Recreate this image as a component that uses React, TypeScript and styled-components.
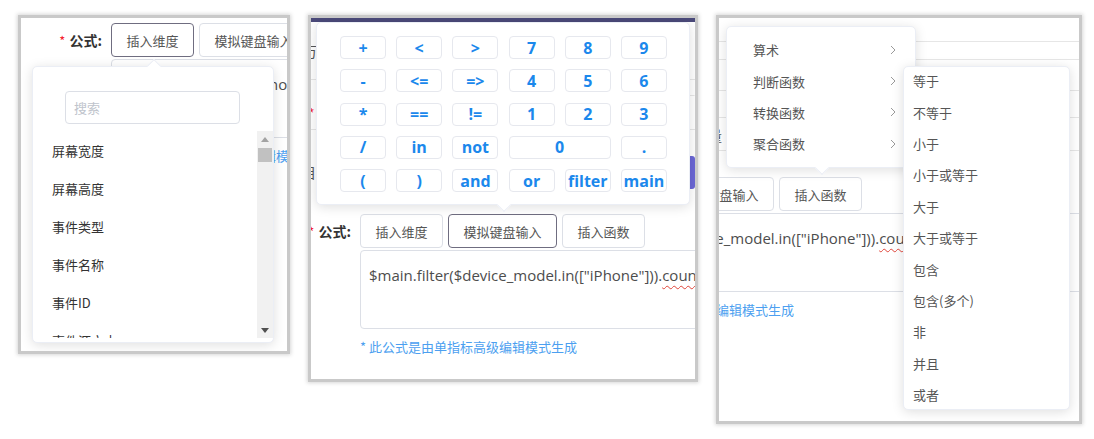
import React from "react";
import styled, { createGlobalStyle } from "styled-components";

const GlobalStyle = createGlobalStyle`
  html, body { margin: 0; padding: 0; background: #fff; }
  body { font-family: "Noto Sans CJK SC", "Noto Sans", sans-serif; }
  * { box-sizing: border-box; }
`;

const Page = styled.div`
  display: flex;
  align-items: flex-start;
  gap: 18px;
  padding: 15px 0 0 18px;
  width: 1094px;
  height: 439px;
  overflow: hidden;
`;

const Frame = styled.div<{ $w: number; $h: number }>`
  position: relative;
  flex: none;
  width: ${(p) => p.$w}px;
  height: ${(p) => p.$h}px;
  border: 3px solid #c9c9c9;
  box-shadow: 0 0 4px 1px rgba(0, 0, 0, 0.16);
  background: #fff;
  overflow: hidden;
  display: flex;
  flex-direction: column;
`;

/* ---------- formula block (shared by the three shots) ---------- */

const Formula = styled.div<{ $shift: number; $top?: number }>`
  flex: none;
  display: flex;
  flex-direction: column;
  margin-left: ${(p) => p.$shift}px;
  margin-top: ${(p) => p.$top ?? 0}px;
`;

const FormRow = styled.div`
  display: flex;
  align-items: center;
`;

const Label = styled.div`
  flex: none;
  width: 90px;
  display: flex;
  justify-content: flex-end;
  align-items: center;
  gap: 4px;
  padding-right: 9px;
  font-size: 14px;
  font-weight: 600;
  color: #333;
  white-space: nowrap;
`;

const Star = styled.span`
  color: #f5222d;
  font-size: 13px;
  font-weight: 400;
`;

const Tabs = styled.div`
  display: flex;
  gap: 5px;
`;

const Tab = styled.div<{ $active?: boolean }>`
  flex: none;
  height: 34px;
  padding: 0 14.5px;
  display: flex;
  align-items: center;
  border: 1px solid ${(p) => (p.$active ? "#6f6d80" : "#dcdfe6")};
  border-radius: 4px;
  font-size: 13px;
  color: #555;
  background: #fff;
  white-space: nowrap;
`;

const Editor = styled.div`
  margin: 2px 0 0 90px;
  width: 560px;
  height: 79px;
  border: 1px solid #dcdfe6;
  border-radius: 4px;
  padding: 12px 8px;
  font-family: "Open Sans", "Noto Sans", sans-serif;
  font-size: 15px;
  line-height: 24px;
  color: #4d4d4d;
  white-space: nowrap;
`;

const Squiggle = styled.span`
  text-decoration: underline wavy #e0453a;
  text-decoration-thickness: 1px;
  text-underline-offset: 4px;
`;

const Note = styled.div`
  margin: 8px 0 0 90px;
  font-size: 13px;
  line-height: 20px;
  color: #4c9ff0;
  white-space: nowrap;
`;

function FormulaBlock({ shift, top, active }: { shift: number; top?: number; active: number }) {
  const tabs = ["插入维度", "模拟键盘输入", "插入函数"];
  return (
    <Formula $shift={shift} $top={top}>
      <FormRow>
        <Label>
          <Star>*</Star>
          <span>公式:</span>
        </Label>
        <Tabs>
          {tabs.map((t, i) => (
            <Tab key={t} $active={i === active}>
              {t}
            </Tab>
          ))}
        </Tabs>
      </FormRow>
      <Editor>
        $main.filter($device_model.in(["iPhone"])).<Squiggle>count</Squiggle>()
      </Editor>
      <Note>* 此公式是由单指标高级编辑模式生成</Note>
    </Formula>
  );
}

/* ---------- background fragments ---------- */

const HeaderBand = styled.div`
  flex: none;
  height: 4px;
  background: #4b4a7a;
`;

const BgRow = styled.div<{ $h: number; $line?: "full" | "right" | "none" }>`
  flex: none;
  height: ${(p) => p.$h}px;
  display: flex;
  align-items: center;
  background: ${(p) =>
    p.$line === "full"
      ? "linear-gradient(#e6e6e6, #e6e6e6) left bottom / 100% 1px no-repeat"
      : p.$line === "right"
      ? "linear-gradient(#e6e6e6, #e6e6e6) right bottom / 40% 1px no-repeat"
      : "none"};
`;

const BgGlyph = styled.span<{ $x: number; $red?: boolean }>`
  flex: none;
  margin-left: ${(p) => p.$x}px;
  font-size: 14px;
  color: ${(p) => (p.$red ? "#f5222d" : "#555")};
`;

const PurpleBtn = styled.div`
  flex: none;
  margin-left: auto;
  width: 70px;
  height: 33px;
  border-radius: 3px;
  background: #6b67d6;
`;

/* ---------- popovers ---------- */

const Pop = styled.div<{ $x: number; $y: number; $w: number; $h: number }>`
  position: absolute;
  left: ${(p) => p.$x}px;
  top: ${(p) => p.$y}px;
  width: ${(p) => p.$w}px;
  height: ${(p) => p.$h}px;
  background: #fff;
  border: 1px solid #ebeef5;
  border-radius: 5px;
  box-shadow: 0 2px 12px rgba(0, 0, 0, 0.13);
  display: flex;
  flex-direction: column;
`;

const Arrow = styled.span<{ $x: number; $dir: "up" | "down" }>`
  position: absolute;
  left: ${(p) => p.$x - 5}px;
  ${(p) => (p.$dir === "up" ? "top: -6px;" : "bottom: -6px;")}
  width: 10px;
  height: 10px;
  background: #fff;
  transform: rotate(45deg);
  ${(p) =>
    p.$dir === "up"
      ? "border-top: 1px solid #ebeef5; border-left: 1px solid #ebeef5;"
      : "border-bottom: 1px solid #ebeef5; border-right: 1px solid #ebeef5;"}
`;

/* dimension dropdown */

const Search = styled.div`
  flex: none;
  margin: 24px 0 0 32px;
  width: 175px;
  height: 33px;
  border: 1px solid #dcdfe6;
  border-radius: 4px;
  padding-left: 8px;
  display: flex;
  align-items: center;
  font-size: 13px;
  color: #c0c4cc;
`;

const ListArea = styled.div`
  flex: none;
  margin-top: 7px;
  height: 207px;
  display: flex;
`;

const List = styled.div`
  flex: 1;
  overflow: hidden;
`;

const ListItem = styled.div`
  height: 38px;
  padding-left: 19px;
  display: flex;
  align-items: center;
  font-size: 13px;
  color: #333;
  white-space: nowrap;
`;

const Scrollbar = styled.div`
  flex: none;
  width: 16px;
  background: #f1f1f1;
  display: flex;
  flex-direction: column;
`;

const ScrollBtn = styled.div`
  flex: none;
  height: 16px;
  display: flex;
  align-items: center;
  justify-content: center;
`;

const Thumb = styled.div`
  flex: none;
  height: 14px;
  margin: 1px 1px 0;
  background: #c1c1c1;
`;

const ScrollGap = styled.div`
  flex: 1;
`;

/* keyboard */

const KeyGrid = styled.div`
  display: grid;
  grid-template-columns: repeat(6, 46px);
  grid-auto-rows: 23px;
  column-gap: 10.2px;
  row-gap: 10.3px;
  padding: 13px 0 0 23px;
`;

const Key = styled.div<{ $span?: number }>`
  grid-column: span ${(p) => p.$span ?? 1};
  border: 1px solid #e6e8ee;
  border-radius: 4px;
  display: flex;
  align-items: center;
  justify-content: center;
  font-family: "Open Sans", "Noto Sans", sans-serif;
  font-weight: 700;
  font-size: 16px;
  color: #1b88ec;
`;

/* function menu */

const MenuList = styled.div<{ $pad: number; $lift?: number }>`
  padding: ${(p) => p.$pad}px 0;
  margin-top: ${(p) => -(p.$lift ?? 0)}px;
  display: flex;
  flex-direction: column;
`;

const MenuItem = styled.div`
  height: 31.4px;
  padding: 0 19px 0 26px;
  display: flex;
  align-items: center;
  justify-content: space-between;
  font-size: 13px;
  color: #555;
`;

const SubItem = styled.div`
  height: 31.4px;
  padding-left: 9px;
  display: flex;
  align-items: center;
  font-size: 13px;
  color: #555;
  white-space: nowrap;
`;

const Chevron = () => (
  <svg width="6" height="10" viewBox="0 0 6 10">
    <polyline points="1,1 5,5 1,9" fill="none" stroke="#9a9a9a" strokeWidth="1" />
  </svg>
);

const Tri = ({ dir, color }: { dir: "up" | "down"; color: string }) => (
  <svg width="8" height="5" viewBox="0 0 8 5">
    <polygon points={dir === "up" ? "0,5 8,5 4,0" : "0,0 8,0 4,5"} fill={color} />
  </svg>
);

const dims = ["屏幕宽度", "屏幕高度", "事件类型", "事件名称", "事件ID", "事件源文本"];

const keys: { k: string; span?: number }[] = [
  { k: "+" }, { k: "<" }, { k: ">" }, { k: "7" }, { k: "8" }, { k: "9" },
  { k: "-" }, { k: "<=" }, { k: "=>" }, { k: "4" }, { k: "5" }, { k: "6" },
  { k: "*" }, { k: "==" }, { k: "!=" }, { k: "1" }, { k: "2" }, { k: "3" },
  { k: "/" }, { k: "in" }, { k: "not" }, { k: "0", span: 2 }, { k: "." },
  { k: "(" }, { k: ")" }, { k: "and" }, { k: "or" }, { k: "filter" }, { k: "main" },
];

const groups = ["算术", "判断函数", "转换函数", "聚合函数"];
const judges = ["等于", "不等于", "小于", "小于或等于", "大于", "大于或等于", "包含", "包含(多个)", "非", "并且", "或者"];

export default function App() {
  return (
    <>
      <GlobalStyle />
      <Page>
        {/* shot 1: dimension picker */}
        <Frame $w={272} $h={339}>
          <FormulaBlock shift={0} top={5} active={0} />
          <Pop $x={11} $y={48} $w={242} $h={277}>
            <Arrow $x={121} $dir="up" />
            <Search>搜索</Search>
            <ListArea>
              <List>
                {dims.map((d) => (
                  <ListItem key={d}>{d}</ListItem>
                ))}
              </List>
              <Scrollbar>
                <ScrollBtn>
                  <Tri dir="up" color="#a3a3a3" />
                </ScrollBtn>
                <Thumb />
                <ScrollGap />
                <ScrollBtn>
                  <Tri dir="down" color="#505050" />
                </ScrollBtn>
              </Scrollbar>
            </ListArea>
          </Pop>
        </Frame>

        {/* shot 2: keyboard */}
        <Frame $w={390} $h={367}>
          <HeaderBand />
          <BgRow $h={58} $line="full">
            <BgGlyph $x={-8}>万</BgGlyph>
          </BgRow>
          <BgRow $h={16} $line="right" />
          <BgRow $h={34} $line="full">
            <BgGlyph $x={-3} $red>*</BgGlyph>
          </BgRow>
          <BgRow $h={84} $line="none">
            <BgGlyph $x={-9}>目</BgGlyph>
            <PurpleBtn />
          </BgRow>
          <FormulaBlock shift={-41} active={1} />
          <Pop $x={5} $y={4} $w={374} $h={183}>
            <Arrow $x={187} $dir="down" />
            <KeyGrid>
              {keys.map((k) => (
                <Key key={k.k} $span={k.span}>
                  {k.k}
                </Key>
              ))}
            </KeyGrid>
          </Pop>
        </Frame>

        {/* shot 3: function menu */}
        <Frame $w={366} $h={409}>
          <BgRow $h={24} $line="full" />
          <BgRow $h={18} $line="full" />
          <BgRow $h={31} $line="full" />
          <BgRow $h={27} $line="full" />
          <BgRow $h={33} $line="full">
            <BgGlyph $x={-11}>量</BgGlyph>
          </BgRow>
          <BgRow $h={26} $line="none" />
          <FormulaBlock shift={-232} active={-1} />
          <Pop $x={7} $y={8} $w={190} $h={142}>
            <Arrow $x={95} $dir="down" />
            <MenuList $pad={7}>
              {groups.map((g) => (
                <MenuItem key={g}>
                  <span>{g}</span>
                  <Chevron />
                </MenuItem>
              ))}
            </MenuList>
          </Pop>
          <Pop $x={184} $y={48} $w={167} $h={344}>
            <MenuList $pad={0} $lift={2}>
              {judges.map((j) => (
                <SubItem key={j}>{j}</SubItem>
              ))}
            </MenuList>
          </Pop>
        </Frame>
      </Page>
    </>
  );
}
